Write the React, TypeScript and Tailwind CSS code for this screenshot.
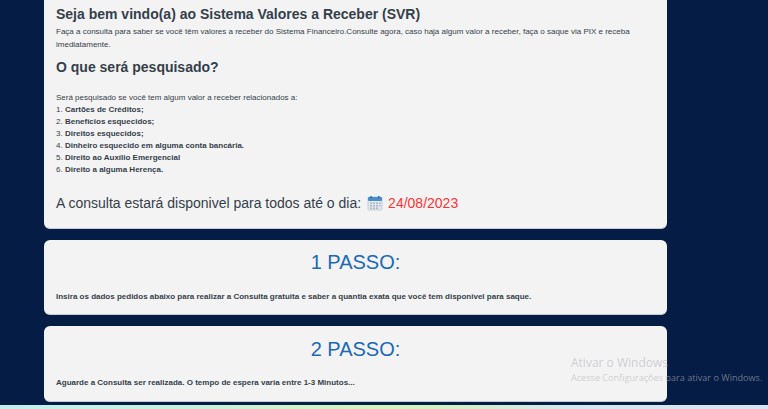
import React from "react";

const items = [
  "Cartões de Créditos;",
  "Benefícios esquecidos;",
  "Direitos esquecidos;",
  "Dinheiro esquecido em alguma conta bancária.",
  "Direito ao Auxílio Emergencial",
  "Direito a alguma Herença.",
];

function CalendarIcon() {
  return (
    <svg width="16" height="16" viewBox="0 0 16 16" className="block shrink-0">
      <rect x="1" y="2" width="14" height="13" rx="1" fill="#e4e9ee" stroke="#a9bac9" strokeWidth="0.6" />
      <rect x="1" y="2" width="14" height="4" rx="1" fill="#4a8fcb" />
      <rect x="3.5" y="1" width="1.4" height="2.4" fill="#2c6aa3" />
      <rect x="11" y="1" width="1.4" height="2.4" fill="#2c6aa3" />
      <g fill="#a3b2c0">
        <rect x="3" y="7.5" width="2" height="1.4" />
        <rect x="6" y="7.5" width="2" height="1.4" />
        <rect x="9" y="7.5" width="2" height="1.4" />
        <rect x="12" y="7.5" width="1.5" height="1.4" />
        <rect x="3" y="10" width="2" height="1.4" />
        <rect x="6" y="10" width="2" height="1.4" />
        <rect x="9" y="10" width="2" height="1.4" />
        <rect x="12" y="10" width="1.5" height="1.4" />
        <rect x="3" y="12.5" width="2" height="1.4" />
        <rect x="6" y="12.5" width="2" height="1.4" />
        <rect x="9" y="12.5" width="2" height="1.4" />
      </g>
    </svg>
  );
}

function StepCard({ title, text }: { title: string; text: string }) {
  return (
    <section className="h-[75.5px] rounded-md bg-[#f3f3f3] px-3 pt-[8.5px] border-b border-[#c5cbd3]">
      <h2 className="text-center text-[20px] leading-[28px] font-normal text-[#1c69b4]">{title}</h2>
      <p className="mt-[13.5px] text-[8px] leading-[13px] font-bold text-[#353f4b]">{text}</p>
    </section>
  );
}

export default function App() {
  return (
    <div className="relative flex h-[409px] w-[768px] flex-col overflow-hidden bg-[#051c44] font-['Liberation_Sans',Arial,sans-serif]">
      <main className="ml-[44px] flex w-[623px] flex-1 flex-col gap-[11px]">
        <section className="h-[228.5px] rounded-b-md bg-[#f3f3f3] px-3 pt-[5px] text-[#353f4b] border-b border-[#c5cbd3]">
          <h1 className="text-[14px] leading-[18px] font-bold">Seja bem vindo(a) ao Sistema Valores a Receber (SVR)</h1>
          <p className="mt-[3px] text-[8px] leading-[12.5px]">
            Faça a consulta para saber se você têm valores a receber do Sistema Financeiro.Consulte agora, caso haja algum valor a receber, faça o saque via PIX e receba imediatamente.
          </p>
          <h2 className="mt-[6px] text-[14px] leading-[20px] font-bold">O que será pesquisado?</h2>
          <p className="mt-[15px] text-[8px] leading-[12px]">Será pesquisado se você tem algum valor a receber relacionados a:</p>
          <ol className="text-[8px] leading-[12px]">
            {items.map((item, i) => (
              <li key={item}>
                {i + 1}. <strong>{item}</strong>
              </li>
            ))}
          </ol>
          <p className="mt-[18px] flex items-center text-[14px] leading-[18px]">
            A consulta estará disponivel para todos até o dia:
            <span className="ml-[6px] mr-[5px]">
              <CalendarIcon />
            </span>
            <span className="text-[#fb3338]">24/08/2023</span>
          </p>
        </section>
        <StepCard
          title="1 PASSO:"
          text="Insira os dados pedidos abaixo para realizar a Consulta gratuita e saber a quantia exata que você tem disponivel para saque."
        />
        <StepCard
          title="2 PASSO:"
          text="Aguarde a Consulta ser realizada. O tempo de espera varia entre 1-3 Minutos..."
        />
      </main>
      <div className="h-[4px] shrink-0 bg-[linear-gradient(90deg,#c3eeee_0%,#c8f0dc_25%,#d8f3b8_50%,#d4f0c4_60%,#d5e6f2_75%,#dde3f0_100%)]" />
      <div className="absolute left-[571px] top-[355px] font-['Open_Sans',sans-serif] text-[rgba(180,180,190,0.6)]">
        <div className="text-[12px] leading-[16px]">Ativar o Windows</div>
        <div className="whitespace-nowrap text-[9.1px] leading-[13px]">Acesse Configurações para ativar o Windows.</div>
      </div>
    </div>
  );
}
